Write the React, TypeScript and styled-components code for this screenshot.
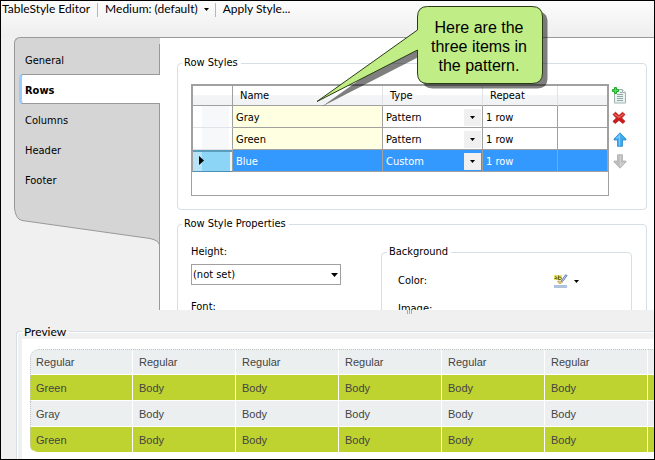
import React, { useState } from "react";
import styled, { createGlobalStyle, css } from "styled-components";

const UI = '"DejaVu Sans Condensed", "Noto Sans", sans-serif';
const SEGOE = 'Lato, "Open Sans", sans-serif';
const LINE = "#a0a0a0";
const GROUP = "#d5dfe5";

const GlobalStyle = createGlobalStyle`
  *, *::before, *::after { box-sizing: border-box; }
  body { margin: 0; background: #f0f0f0; }
  button, select { font: inherit; color: inherit; margin: 0; }
  fieldset { margin: 0; min-width: 0; }
`;

const Window = styled.main`
  position: relative;
  display: flex;
  flex-direction: column;
  min-height: 100vh;
  overflow: hidden;
  border: 1px solid #000;
  background: #f0f0f0;
  color: #000;
  font: 11px/14px ${UI};
`;

const Toolbar = styled.header`
  display: flex;
  align-items: flex-start;
  height: 36px;
  background: linear-gradient(#fcfcfc, #eeeeee);
  font: 12px/16px ${SEGOE};
  white-space: nowrap;
`;

const Title = styled.h1`
  margin: 0;
  padding: 0 7px 0 1px;
  font: inherit;
`;

const ToolButton = styled.button`
  display: flex;
  align-items: center;
  gap: 6px;
  padding: 0 6px 0 7px;
  border: 0;
  background: none;
`;

const Separator = styled.span`
  width: 1px;
  height: 14px;
  margin-top: 2px;
  background: #b8b8b8;
`;

const Editor = styled.section`
  display: flex;
  flex: none;
  height: 273px;
  overflow: hidden;
`;

const Sidebar = styled.nav`
  flex: none;
  display: flex;
  flex-direction: column;
  width: 146px;
  margin-left: 13px;
`;

const Tabs = styled.div`
  display: flex;
  flex-direction: column;
  padding-top: 6px;
  border: 1px solid #999;
  border-width: 1px 0 0 1px;
  border-top-left-radius: 6px;
  background: #d5d5d5;
`;

const Tab = styled.button<{ $active: boolean }>`
  height: 30px;
  padding: 4px 0 0 10px;
  border: 0;
  border-right: 1px solid #999;
  background: none;
  text-align: left;
  ${(p) =>
    p.$active &&
    css`
      margin-left: 4px;
      padding: 3px 0 0 3px;
      border: 1px solid #999;
      border-width: 1px 0;
      border-left: 3px solid #99ccff;
      border-radius: 4px 0 0 4px;
      background: #fff;
      font-weight: bold;
    `}
`;

const SidebarFoot = styled.svg`
  display: block;
  width: 100%;
  height: 53px;
`;

const Content = styled.div`
  flex: 1;
  min-width: 0;
  display: flex;
  flex-direction: column;
  gap: 7px;
  padding: 18px 7px 0 17px;
  border-top: 1px solid #999;
  background: #fff;
`;

const ContentEdge = styled.div`
  flex: none;
  width: 1px;
  margin: 206px 0 0 -1px;
  background: #999;
`;

const Group = styled.fieldset`
  flex: none;
  padding: 14px 14px 13px 13px;
  border: 1px solid ${GROUP};
  border-radius: 4px;
`;

const Legend = styled.legend`
  margin-left: -9px;
  padding: 0 3px 0 2px;
  line-height: 14px;
`;

const RowEditor = styled.div`
  display: flex;
  gap: 3px;
`;

const GridFrame = styled.div`
  flex: 1;
  min-width: 0;
  height: 112px;
  border: 1px solid ${LINE};
`;

const Grid = styled.table`
  width: 100%;
  table-layout: fixed;
  border: 1px solid ${LINE};
  border-bottom: 0;
  border-collapse: separate;
  border-spacing: 0;
`;

const Column = styled.col<{ $width?: number }>`
  width: ${(p) => (p.$width ? `${p.$width}px` : "auto")};
`;

const HeadCell = styled.th<{ $strong?: boolean }>`
  height: 20px;
  padding: 1px 7px 0;
  border-right: 1px solid ${(p) => (p.$strong ? LINE : "#e2e3e6")};
  border-bottom: 1px solid ${LINE};
  background: linear-gradient(#fff 45%, #f4f5f7 50%, #f1f2f4);
  font-weight: normal;
  text-align: left;
  &:last-child { border-right: 0; }
`;

const Cell = styled.td<{ $name?: boolean; $selected: boolean }>`
  height: 22px;
  padding: 2px 1px 0 3px;
  border-right: 1px solid ${LINE};
  border-bottom: 1px solid ${LINE};
  background: ${(p) => (p.$selected ? "#3399ff" : p.$name ? "#ffffe1" : "#fff")};
  color: ${(p) => (p.$selected ? "#fff" : "#000")};
  &:last-child { border-right: 0; }
`;

const Marker = styled.th<{ $selected: boolean }>`
  height: 22px;
  padding: 0 0 0 6px;
  border-right: 1px solid ${LINE};
  border-bottom: 1px solid ${(p) => (p.$selected ? "#4d8fb0" : "#e2e3e6")};
  background: ${(p) =>
    p.$selected
      ? "linear-gradient(90deg, #b8e2f6 9px, #8dd5f7 9px)"
      : "linear-gradient(90deg, #fff 9px, #f7f8fa 9px 36px, #fff 36px)"};
  box-shadow: ${(p) => (p.$selected ? "inset 0 2px #5b9dbd, inset -2px 0 #e8f6fd" : "none")};
  text-align: left;
  svg { display: block; }
`;

const SelectBox = styled.span<{ $framed?: boolean }>`
  display: grid;
  align-items: center;
  ${(p) => p.$framed && css`border: 1px solid ${LINE}; background: #fff;`}
`;

const Select = styled.select<{ $tall?: boolean }>`
  grid-area: 1 / 1;
  width: 100%;
  height: ${(p) => (p.$tall ? 19 : 17)}px;
  padding: 0 ${(p) => (p.$tall ? 1 : 0)}px;
  appearance: none;
  border: 0;
  border-radius: 0;
  background: none;
  option { color: #000; }
`;

const SelectArrow = styled.span<{ $button?: boolean }>`
  grid-area: 1 / 1;
  justify-self: end;
  display: grid;
  place-items: center;
  width: ${(p) => (p.$button ? 17 : 12)}px;
  height: 17px;
  background: ${(p) => (p.$button ? "#f0f0f0" : "none")};
  color: #000;
  pointer-events: none;
`;

const Actions = styled.div`
  display: flex;
  flex-direction: column;
  gap: 7px;
  width: 20px;
  padding-top: 3px;
`;

const IconButton = styled.button`
  display: flex;
  padding: 0;
  border: 0;
  background: none;
`;

const Properties = styled.div`
  display: grid;
  grid-template-columns: 150px 1fr;
  gap: 40px;
  align-items: start;
`;

const Fields = styled.div`
  display: flex;
  flex-direction: column;
`;

const Label = styled.label`
  margin-bottom: 5px;
  & ~ & { margin-top: 15px; }
`;

const Background = styled(Group)`
  height: 120px;
  padding: 12px 60px 0 16px;
`;

const BackgroundLegend = styled(Legend)`
  margin-left: -11px;
`;

const BackgroundRow = styled.div`
  display: grid;
  grid-template-columns: 155px 1fr;
  align-items: center;
  min-height: 20px;
  margin-bottom: 8px;
`;

const ColorButton = styled(IconButton)`
  align-items: center;
  gap: 6px;
`;

const Splitter = styled.div`
  display: flex;
  justify-content: center;
  gap: 1px;
  height: 14px;
  padding-left: 164px;
`;

const Grip = styled.span`
  width: 1px;
  height: 4px;
  background: #aaa;
`;

const Preview = styled.fieldset`
  flex: 1;
  margin-left: 15px;
  padding: 0 0 0 5px;
  border: 1px solid ${GROUP};
  border-width: 1px 0 0 1px;
  border-top-left-radius: 3px;
  box-shadow: inset 1px 1px #fff;
`;

const PreviewLegend = styled.legend`
  margin-left: 0;
  padding: 0 3px 0 2px;
  font: 12px/15px ${SEGOE};
`;

const Page = styled.div`
  padding: 10px 0 6px 8px;
  overflow: hidden;
  background: #fff;
`;

const Sample = styled.table`
  width: 721px;
  table-layout: fixed;
  border-collapse: separate;
  border-spacing: 0;
  font: 11px/14px "Liberation Sans", Arial, sans-serif;
  color: #444;
`;

const SampleCell = styled.td<{ $green: boolean }>`
  height: 26px;
  padding: 0 6px;
  border-right: 1px solid #fff;
  border-bottom: 1px solid #fff;
  background: ${(p) => (p.$green ? "#bed230" : "#ebeff0")};
  &:first-child { border-left: 1px dotted #c4c4c4; padding-left: 5px; }
  tr:first-child > & { border-top: 1px dotted #c4c4c4; }
  tr:first-child > &:first-child { border-top-left-radius: 9px; }
  tr:last-child > &:first-child { border-bottom-left-radius: 8px; }
`;

const Callout = styled.aside`
  position: absolute;
  top: 5px;
  left: 314px;
  width: 234px;
  padding: 12px 8px 0 102px;
  font: 16px/19px "Liberation Sans", Arial, sans-serif;
  text-align: center;
`;

const CalloutShape = styled.svg`
  position: absolute;
  inset: 0 auto auto 0;
`;

const CalloutText = styled.p`
  position: relative;
  margin: 0;
`;

const Caret = () => (
  <svg width="7" height="4" viewBox="0 0 7 4" aria-hidden="true">
    <path d="M0 0h7L3.500 4z" fill="currentColor" />
  </svg>
);

const SmallCaret = () => (
  <svg width="5" height="3" viewBox="0 0 5 3" aria-hidden="true">
    <path d="M0 0h5L2.500 3z" fill="currentColor" />
  </svg>
);

const AddIcon = () => (
  <svg width="16" height="17" viewBox="0 0 16 17">
    <path d="M2.500 2.500h8l3 3v10.500h-11z" fill="#eaf2f0" stroke="#9fb3b1" />
    <path d="M10.500 2.500v3h3" fill="#fff" stroke="#9fb3b1" />
    <path d="M5 7.500h6M5 9.500h6M5 11.500h6M5 13.500h6M8 5.500h2" stroke="#90a6a8" />
    <path d="M2.500.5h2v2h2v2h-2v2h-2v-2h-2v-2h2z" fill="#4fe04f" stroke="#1ea82a" />
  </svg>
);

const DeleteIcon = () => (
  <svg width="16" height="14" viewBox="0 0 16 14">
    <path d="M3.500 1.300L7 4.500l3.500-3.200L13 3.500 9.600 7l3.400 3.300-2 2.200L7 9.300 3 12.500l-2-2.200L4.400 7 1 3.500z" fill="#cc1c1c" stroke="#b01515" strokeWidth=".8" />
    <path d="M2.500 3L7 6.500 11.500 3" fill="none" stroke="#ee6a62" strokeWidth="1.300" />
  </svg>
);

const ArrowIcon = ({ down = false }: { down?: boolean }) => (
  <svg width="16" height="15" viewBox="0 0 16 15">
    <g transform={down ? "rotate(180 8 7.500)" : undefined}>
      <path
        d="M8 .8L14 7v1h-3.500v6.300h-5V8H2V7z"
        fill={down ? "#bdbdbd" : "#3fa9ee"}
        stroke={down ? "#b0b0b0" : "#2b86c9"}
        strokeWidth=".8"
      />
      <path d="M7.500 2.500v11M4.500 6.500l3-3" stroke={down ? "#d0d0d0" : "#7ccbf8"} strokeWidth="1.300" />
    </g>
  </svg>
);

const HighlightIcon = () => (
  <svg width="15" height="15" viewBox="0 0 15 15" aria-hidden="true">
    <path d="M1 1h8v5H1z" fill="#e9e36a" />
    <path d="M1.500 4.500h2M2 2.500l2 1v2M5.500 1.500v4h2l1-1-1-1.500H6" fill="none" stroke="#66641f" />
    <path d="M12.500.8l1.500.7-3.500 5-2 1.500-.5-.5z" fill="#c7d6f3" stroke="#5d71a8" strokeWidth=".9" />
    <path d="M4.500 7h3l2 1-1.500 1.500H6z" fill="#e8c96a" stroke="#9c8838" strokeWidth=".5" />
    <path d="M1 11h13v3H1z" fill="#b0c4e0" />
  </svg>
);

const bubble =
  "M112.500.5H217Q227.500.5 227.500 11V67Q227.500 77.500 217 77.500H112.500Q102.500 77.500 102.500 67V44L2 95.500 102.500 24V11Q102.500.5 112.500.5Z";

const tabs = ["General", "Rows", "Columns", "Header", "Footer"];
const rowStyles = [
  { name: "Gray", type: "Pattern", repeat: "1 row" },
  { name: "Green", type: "Pattern", repeat: "1 row" },
  { name: "Blue", type: "Custom", repeat: "1 row" },
];
const sampleRows = [
  { first: "Regular", rest: "Regular", green: false },
  { first: "Green", rest: "Body", green: true },
  { first: "Gray", rest: "Body", green: false },
  { first: "Green", rest: "Body", green: true },
];

export default function App() {
  const [tab, setTab] = useState("Rows");
  const [selected, setSelected] = useState(2);

  return (
    <>
      <GlobalStyle />
      <Window>
        <Toolbar>
          <Title>TableStyle Editor</Title>
          <Separator />
          <ToolButton type="button" aria-haspopup="menu">
            Medium: (default)
            <SmallCaret />
          </ToolButton>
          <Separator />
          <ToolButton type="button">Apply Style...</ToolButton>
        </Toolbar>

        <Editor>
          <Sidebar>
            <Tabs role="tablist" aria-orientation="vertical">
              {tabs.map((t) => (
                <Tab key={t} type="button" role="tab" aria-selected={t === tab} $active={t === tab} onClick={() => setTab(t)}>
                  {t}
                </Tab>
              ))}
            </Tabs>
            <SidebarFoot viewBox="0 0 146 53" preserveAspectRatio="none" aria-hidden="true">
              <path d="M.5 0V14Q1.500 25 8 26.500L136 44.500Q145 46.500 145.500 51V0" fill="#d5d5d5" stroke="#999" />
            </SidebarFoot>
          </Sidebar>
          <ContentEdge />
          <Content>
            <Group>
              <Legend>Row Styles</Legend>
              <RowEditor>
                <GridFrame>
                  <Grid>
                    <colgroup>
                      <Column $width={40} />
                      <Column $width={150} />
                      <Column $width={100} />
                      <Column $width={75} />
                      <Column />
                    </colgroup>
                    <thead>
                      <tr>
                        <HeadCell $strong />
                        <HeadCell scope="col">Name</HeadCell>
                        <HeadCell scope="col">Type</HeadCell>
                        <HeadCell scope="col">Repeat</HeadCell>
                        <HeadCell />
                      </tr>
                    </thead>
                    <tbody>
                      {rowStyles.map((r, i) => {
                        const on = i === selected;
                        return (
                          <tr key={r.name} aria-selected={on} onClick={() => setSelected(i)}>
                            <Marker $selected={on}>
                              {on && (
                                <svg width="5" height="9" viewBox="0 0 5 9" aria-hidden="true">
                                  <path d="M0 0l5 4.500L0 9z" />
                                </svg>
                              )}
                            </Marker>
                            <Cell $selected={on} $name>{r.name}</Cell>
                            <Cell $selected={on}>
                              <SelectBox>
                                <Select aria-label={`${r.name} type`} defaultValue={r.type}>
                                  <option>Pattern</option>
                                  <option>Custom</option>
                                </Select>
                                <SelectArrow $button>
                                  <SmallCaret />
                                </SelectArrow>
                              </SelectBox>
                            </Cell>
                            <Cell $selected={on}>{r.repeat}</Cell>
                            <Cell $selected={on} />
                          </tr>
                        );
                      })}
                    </tbody>
                  </Grid>
                </GridFrame>
                <Actions>
                  <IconButton type="button" aria-label="Add row style"><AddIcon /></IconButton>
                  <IconButton type="button" aria-label="Delete row style"><DeleteIcon /></IconButton>
                  <IconButton type="button" aria-label="Move up"><ArrowIcon /></IconButton>
                  <IconButton type="button" aria-label="Move down"><ArrowIcon down /></IconButton>
                </Actions>
              </RowEditor>
            </Group>

            <Group>
              <Legend>Row Style Properties</Legend>
              <Properties>
                <Fields>
                  <Label htmlFor="height">Height:</Label>
                  <SelectBox $framed>
                    <Select id="height" $tall defaultValue="(not set)">
                      <option>(not set)</option>
                    </Select>
                    <SelectArrow>
                      <Caret />
                    </SelectArrow>
                  </SelectBox>
                  <Label as="span">Font:</Label>
                </Fields>
                <Background>
                  <BackgroundLegend>Background</BackgroundLegend>
                  <BackgroundRow>
                    <span id="color">Color:</span>
                    <ColorButton type="button" aria-labelledby="color">
                      <HighlightIcon />
                      <SmallCaret />
                    </ColorButton>
                  </BackgroundRow>
                  <BackgroundRow>Image:</BackgroundRow>
                </Background>
              </Properties>
            </Group>
          </Content>
        </Editor>

        <Splitter role="separator" aria-orientation="horizontal">
          <Grip />
          <Grip />
          <Grip />
        </Splitter>

        <Preview>
          <PreviewLegend>Preview</PreviewLegend>
          <Page>
            <Sample>
              <tbody>
                {sampleRows.map((r, i) => (
                  <tr key={i}>
                    <SampleCell $green={r.green}>{r.first}</SampleCell>
                    {[1, 2, 3, 4, 5].map((c) => (
                      <SampleCell key={c} $green={r.green}>{r.rest}</SampleCell>
                    ))}
                    <SampleCell $green={r.green} />
                  </tr>
                ))}
              </tbody>
            </Sample>
          </Page>
        </Preview>

        <Callout>
          <CalloutShape width="236" height="102" viewBox="0 0 236 102" aria-hidden="true">
            <path d={bubble} transform="translate(5 5)" fill="#000" fillOpacity=".5" />
            <path d={bubble} fill="#c0ed85" stroke="#2b3b16" strokeLinejoin="round" />
          </CalloutShape>
          <CalloutText>
            Here are the
            <br />
            three items in
            <br />
            the pattern.
          </CalloutText>
        </Callout>
      </Window>
    </>
  );
}
